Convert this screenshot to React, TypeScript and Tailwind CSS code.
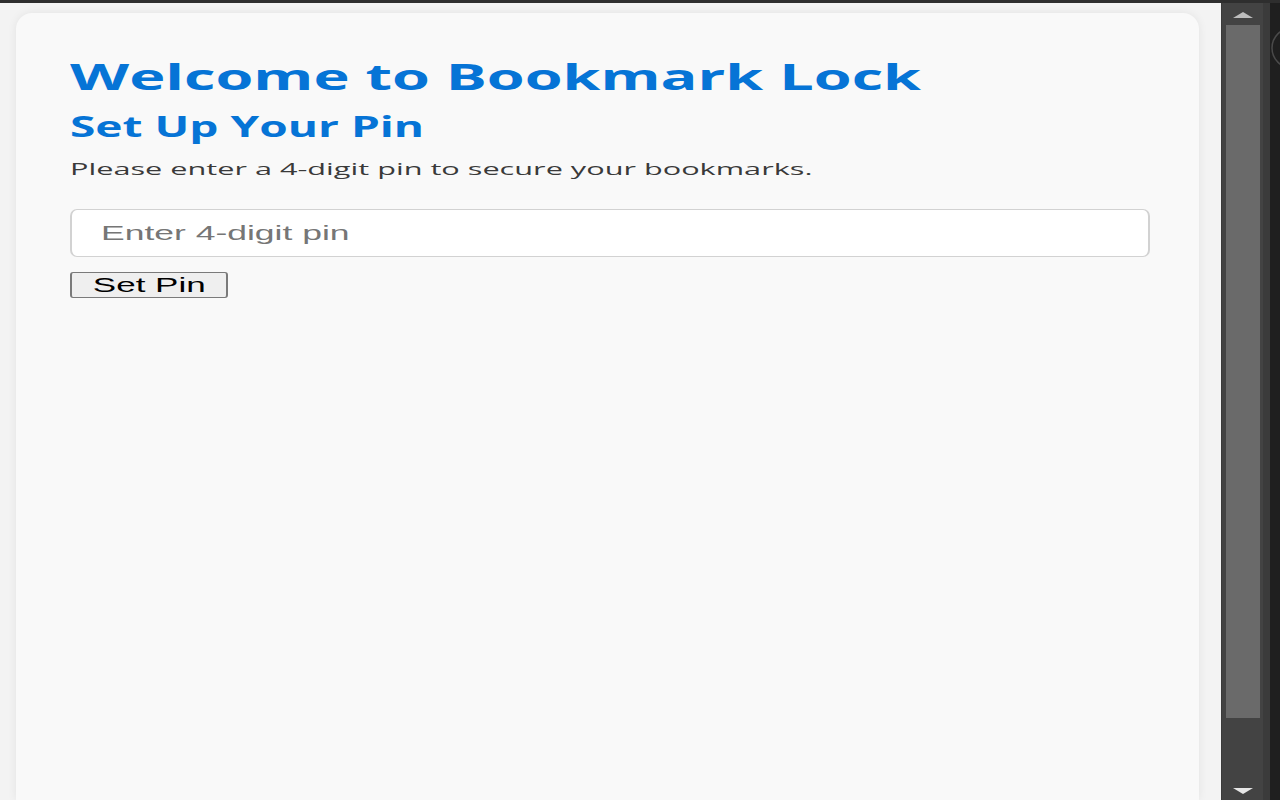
import { useState } from "react"

function ScrollArrow({ down }: { down?: boolean }) {
  return (
    <svg width="20" height="7" viewBox="0 0 20 7" className="block">
      {down ? (
        <polygon points="0,0 20,0 10,6" fill="#e6e6e6" />
      ) : (
        <polygon points="0,6 20,6 10,0" fill="#bdbdbd" />
      )}
    </svg>
  )
}

export default function App() {
  const [pin, setPin] = useState("")

  return (
    <div className="flex flex-col w-[1280px] h-[800px] overflow-hidden bg-[#1f1f1f]">
      <div className="h-[3px] bg-[#2e2e2e]" />

      <div className="flex flex-1 min-h-0">
        <div className="flex-1 flex flex-col bg-[#f3f3f3] pl-4 pr-[22px] pt-[10px]">
          <div className="flex-1 rounded-t-[16px] bg-[#f9f9f9] shadow-[0_0_10px_rgba(0,0,0,0.07)] pt-[46px] pl-[54px] pr-[49px]">
            <h1 className="text-[35px] leading-[35px] font-bold text-[#0674d6] font-['Open_Sans',sans-serif]">
              <span className="inline-block origin-left scale-x-[1.748] whitespace-nowrap">
                Welcome to Bookmark Lock
              </span>
            </h1>
            <h2 className="mt-[18px] text-[28px] leading-[28px] font-bold text-[#0674d6] font-['Open_Sans',sans-serif]">
              <span className="inline-block origin-left scale-x-[1.645] whitespace-nowrap">
                Set Up Your Pin
              </span>
            </h2>
            <p className="mt-[20px] text-[17px] leading-[17px] text-[#3a3a3a] font-['Open_Sans',sans-serif]">
              <span className="inline-block origin-left scale-x-[1.804] whitespace-nowrap">
                Please enter a 4-digit pin to secure your bookmarks.
              </span>
            </p>

            <div className="mt-[32px] flex items-center w-[1080px] h-[48px] overflow-hidden rounded-[7px] border border-x-2 border-[#d2d2d2] bg-white pl-[29px]">
              <input
                type="password"
                inputMode="numeric"
                maxLength={4}
                value={pin}
                onChange={(e) => setPin(e.target.value)}
                placeholder="Enter 4-digit pin"
                className="w-[600px] origin-left scale-x-[1.69] bg-transparent text-[21px] text-[#222] placeholder:text-[#767676] outline-none font-['Liberation_Sans',Arial,sans-serif]"
              />
            </div>

            <button className="mt-[15px] flex items-center justify-center w-[158px] h-[26px] rounded-[3px] border border-x-2 border-[#7a7a7a] bg-[#efefef] text-[20px] leading-none text-black font-['Liberation_Sans',Arial,sans-serif]">
              <span className="inline-block scale-x-[1.75] whitespace-nowrap">Set Pin</span>
            </button>
          </div>
        </div>

        <div className="w-[42px] flex flex-col items-center bg-[#434343] border-l border-[#3a3a3a]">
          <div className="h-[22px] flex items-center pt-[2px]">
            <ScrollArrow />
          </div>
          <div className="w-[34px] h-[693px] bg-[#6a6a6a]" />
          <div className="flex-1" />
          <div className="h-[14px] flex items-start pt-[2px]">
            <ScrollArrow down />
          </div>
        </div>

        <div className="w-[7px] bg-[#3b3b3b]" />
        <div className="w-[10px] bg-[#1f1f1f] overflow-hidden">
          <svg width="10" height="80" viewBox="0 0 10 80" className="block">
            <circle cx="22" cy="45" r="20" fill="none" stroke="#4a4a4a" strokeWidth="1.5" />
          </svg>
        </div>
      </div>
    </div>
  )
}
